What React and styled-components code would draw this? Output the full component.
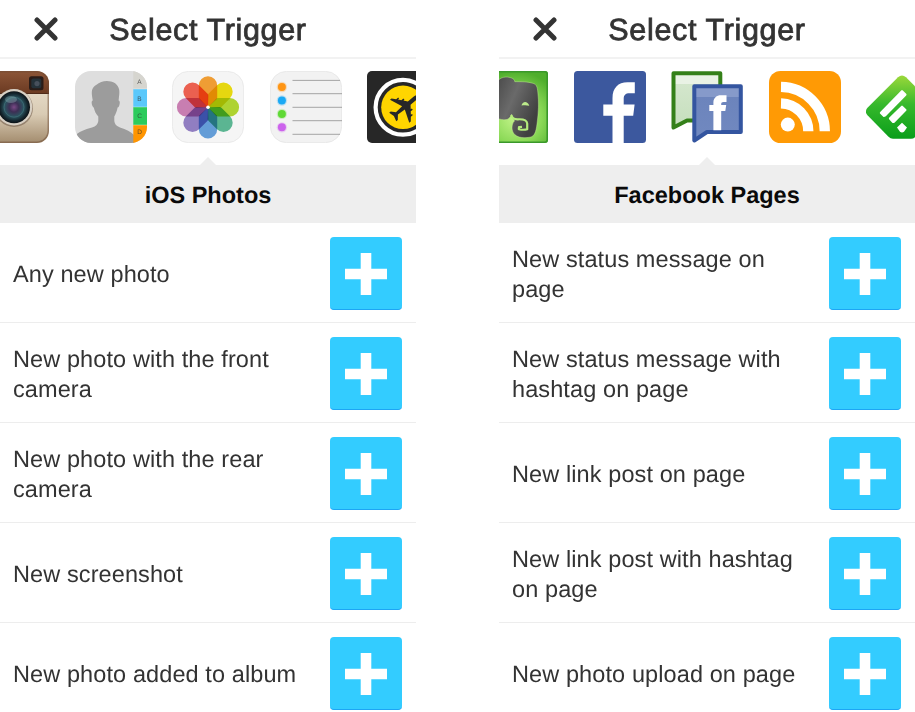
import React from 'react'
import styled, { createGlobalStyle } from 'styled-components'

const triggers = {
  photos: [
    'Any new photo',
    'New photo with the front camera',
    'New photo with the rear camera',
    'New screenshot',
    'New photo added to album'
  ],
  pages: [
    'New status message on page',
    'New status message with hashtag on page',
    'New link post on page',
    'New link post with hashtag on page',
    'New photo upload on page'
  ]
}

const petals = [
  '#f9a436',
  '#f0e010',
  '#b5dc33',
  '#5fbd98',
  '#68a4e0',
  '#9783c9',
  '#d083b8',
  '#f56453'
]

const InstagramIcon = () => (
  <Icon viewBox="0 0 72 72">
    <defs>
      <linearGradient id="igBrown" x2="0" y2="1">
        <stop offset="0" stopColor="#8d5638" />
        <stop offset="1" stopColor="#6b3a22" />
      </linearGradient>
      <linearGradient id="igCream" x2="0" y2="1">
        <stop offset="0" stopColor="#efe6d6" />
        <stop offset="0.6" stopColor="#d9cbb4" />
        <stop offset="1" stopColor="#a38c6e" />
      </linearGradient>
      <radialGradient id="igLens">
        <stop offset="0" stopColor="#7a4a86" />
        <stop offset="0.3" stopColor="#3d2f55" />
        <stop offset="0.6" stopColor="#2b5560" />
        <stop offset="0.85" stopColor="#15262e" />
        <stop offset="1" stopColor="#0c1216" />
      </radialGradient>
      <clipPath id="igClip">
        <rect width="72" height="72" rx="12" />
      </clipPath>
    </defs>
    <g clipPath="url(#igClip)">
      <rect width="72" height="72" fill="url(#igCream)" />
      <rect width="72" height="22.5" fill="url(#igBrown)" />
      <rect y="22" width="72" height="1" fill="#4f2a19" />
      <rect
        x="0.75"
        y="0.75"
        width="70.5"
        height="70.5"
        rx="11.5"
        fill="none"
        stroke="#6b4a34"
        strokeOpacity="0.5"
        strokeWidth="1.5"
      />
    </g>
    <rect x="52" y="5.3" width="14.5" height="14" rx="2.5" fill="#2a1c18" />
    <rect x="54.3" y="7.5" width="10" height="9.8" rx="2" fill="#25323a" />
    <circle cx="60" cy="12.6" r="2.6" fill="#47505c" />
    <circle cx="37" cy="37" r="19" fill="#6d5847" fillOpacity="0.55" />
    <circle cx="37" cy="36.2" r="18.2" fill="#d8d0c4" />
    <circle cx="37" cy="36.2" r="16" fill="url(#igLens)" />
    <circle cx="37" cy="36.2" r="10" fill="none" stroke="#4c7c86" strokeOpacity="0.5" />
    <ellipse cx="34" cy="28.5" rx="6" ry="3.5" fill="#9dc0c4" fillOpacity="0.35" />
  </Icon>
)

const ContactsIcon = () => (
  <Icon viewBox="0 0 72 72">
    <defs>
      <clipPath id="contactsClip">
        <rect width="72" height="72" rx="16" />
      </clipPath>
    </defs>
    <g clipPath="url(#contactsClip)">
      <rect width="72" height="72" fill="#dedede" />
      <path
        d="M0 65C3 61 10 58.5 17 56.5C21 55.3 23 53 23.3 50V45.5C21 43 19.5 40 18.8 36.5C17.3 36 16.3 32 16.8 30.5C17 29.8 17.5 29.6 17.8 29.6C16.8 24 16 19.5 18.3 16.5C19.5 14.8 20.5 14.5 21.5 13.8C25 10.5 31 9 36 10.5C42.5 12.3 45 17 44.3 23L43.6 29.6C44.5 29.6 45 31 44.7 32.5C44.3 35 43.6 36.6 42.6 36.6C42 40 40.8 43 39.3 45.5V50C39.5 53 41.5 55.2 45 56.5C51 58.5 56 60.5 59 64V72H0Z"
        fill="#9c9c9c"
      />
      <rect x="58.3" width="14" height="18" fill="#d6d5cf" />
      <rect x="58.3" y="18" width="14" height="18" fill="#5ac8fb" />
      <rect x="58.3" y="36" width="14" height="18" fill="#2ccb5c" />
      <rect x="58.3" y="54" width="14" height="18" fill="#ff9500" />
      <path d="M58.3 18H72M58.3 36H72M58.3 54H72" stroke="#fff" strokeOpacity="0.5" strokeWidth="0.7" />
    </g>
    <TabLetter x="64.5" y="13.2">A</TabLetter>
    <TabLetter x="64.5" y="29.5">B</TabLetter>
    <TabLetter x="64.5" y="47">C</TabLetter>
    <TabLetter x="64.5" y="63.3">D</TabLetter>
  </Icon>
)

const PhotosIcon = () => (
  <Icon viewBox="0 0 72 72">
    <rect x="0.4" y="0.4" width="71.2" height="71.2" rx="16" fill="#f5f5f5" stroke="#e6e6e6" strokeWidth="0.8" />
    {petals.map((color, i) => (
      <Petal
        key={color}
        d="M26.8 14.4A9.2 9.2 0 0 1 45.2 14.4V26.5Q45.2 27.5 44.4 28.3L36 36.3L27.6 28.3Q26.8 27.5 26.8 26.5Z"
        fill={color}
        transform={`rotate(${i * 45} 36 36.3)`}
      />
    ))}
    <circle cx="36" cy="36.3" r="1.8" fill="#fff" />
  </Icon>
)

const RemindersIcon = () => (
  <Icon viewBox="0 0 72 72">
    <rect x="0.4" y="0.4" width="71.2" height="71.2" rx="16" fill="#f2f2f2" stroke="#e4e4e4" strokeWidth="0.8" />
    {['#ff9514', '#1ba9f5', '#5fd935', '#cc63ec'].map((color, i) => (
      <g key={color}>
        <circle cx="11.9" cy={16 + i * 13.45} r="5.2" fill={color} fillOpacity="0.25" />
        <circle cx="11.9" cy={16 + i * 13.45} r="4" fill={color} />
      </g>
    ))}
    <path
      d="M22.5 9.4H70M22.5 22.7H72M22.5 36.3H72M22.5 49.7H72M22.5 63.3H70"
      stroke="#9b9b9b"
      strokeWidth="0.9"
    />
  </Icon>
)

const FlightIcon = () => (
  <Icon viewBox="0 0 72 72">
    <rect width="72" height="72" rx="5" fill="#272727" />
    <circle cx="36" cy="36.3" r="27.4" fill="none" stroke="#fff" strokeWidth="4.2" />
    <circle cx="36" cy="36.3" r="21.8" fill="#ffd500" />
    <path
      d="M0 -18C1.4 -18 2.1 -15.5 2.1 -13V-6L5.7 -3.2V-4.6H7.3V-1.9L10 0.2V-1.2H11.4V1.4L15 4.5V6.5L2.1 1.5L1.5 10L5.5 13.5V15.5L0 14L-5.5 15.5V13.5L-1.5 10L-2.1 1.5L-15 6.5V4.5L-11.4 1.4V-1.2H-10V0.2L-7.3 -1.9V-4.6H-5.7V-3.2L-2.1 -6V-13C-2.1 -15.5 -1.4 -18 0 -18Z"
      transform="translate(37.6 36) rotate(50)"
      fill="#272727"
    />
  </Icon>
)

const EvernoteIcon = () => (
  <Icon viewBox="0 0 72 72">
    <defs>
      <radialGradient id="enGreen" cx="0.55" cy="0.65" r="0.65">
        <stop offset="0" stopColor="#c5f58b" />
        <stop offset="0.55" stopColor="#8bd957" />
        <stop offset="1" stopColor="#4fae2c" />
      </radialGradient>
      <linearGradient id="enGrey" x2="1" y2="0.5">
        <stop offset="0" stopColor="#3c3c3c" />
        <stop offset="0.55" stopColor="#6a6a6a" />
        <stop offset="1" stopColor="#404040" />
      </linearGradient>
    </defs>
    <rect width="72" height="72" rx="3" fill="url(#enGreen)" />
    <rect x="0.8" y="0.8" width="70.4" height="70.4" rx="2.5" fill="none" stroke="#3a982a" strokeWidth="1.6" />
    <path
      d="M10 21L20 12C23 7 28 5.3 33 6.3C37 7 38.6 8.5 38.8 10.7C46 10.5 52 10.8 57 12.3C60.5 13.3 61.3 16 61.8 21C63 31 62.5 42 61 53C60 61 58.5 65.5 54 66.2C49 67 42.5 67 39 63.8C36 61 35.5 57 36.5 53.5C36.8 52 37.5 50.8 38.5 50L35.5 43.3C34.5 47 31.5 49.2 27.5 48.8C22 48 14 46 10 40Z"
      fill="url(#enGrey)"
      stroke="#c9f397"
      strokeOpacity="0.6"
      strokeWidth="0.7"
    />
    <path
      d="M35.2 44C36 47 38 48.5 42 48.3C48 48 50.8 49 51.2 52.5V58.2C48.5 59 45.5 58.8 42.8 58.2L43 56L46 55.8"
      fill="none"
      stroke="#b4ec7c"
      strokeWidth="2.2"
      strokeLinejoin="round"
    />
    <path d="M45.5 34.5C46.5 30 51.5 29.5 53.3 34.8C51 34 48 34 45.5 34.5Z" fill="#bcea8b" />
  </Icon>
)

const FacebookIcon = () => (
  <Icon viewBox="0 0 72 72">
    <rect width="72" height="72" rx="3.5" fill="#3c589e" />
    <path
      d="M38.5 72V44.7H29.3V33.4H38.5V27C38.5 17 44 11.2 53.5 11.2H60.8V22.2H55.5C51.5 22.2 49.7 24 49.7 27.8V33.4H60.6L59.2 44.7H49.7V72Z"
      fill="#fff"
    />
  </Icon>
)

const FacebookPagesIcon = () => (
  <Icon viewBox="0 0 72 72">
    <defs>
      <linearGradient id="pagesBlue" x2="0" y2="1">
        <stop offset="0.2" stopColor="#869aca" />
        <stop offset="0.2" stopColor="#6c84bc" />
        <stop offset="1" stopColor="#7189c0" />
      </linearGradient>
      <linearGradient id="pagesGreen" x2="0" y2="1">
        <stop offset="0.2" stopColor="#e9f2e5" />
        <stop offset="0.2" stopColor="#d3e6cc" />
        <stop offset="1" stopColor="#c6dfbd" />
      </linearGradient>
    </defs>
    <path
      d="M2.5 2.2H49.3V49.5H16L2.5 56.5Z"
      fill="url(#pagesGreen)"
      stroke="#348019"
      strokeWidth="4"
      strokeLinejoin="round"
    />
    <path
      d="M23.3 15.2H69.8V61H36L23.3 69.5Z"
      fill="url(#pagesBlue)"
      stroke="#3455a0"
      strokeWidth="4"
      strokeLinejoin="round"
    />
    <path
      d="M42.4 59.2V40H38.3V34H42.4V31.5C42.4 27 45.5 24.3 50 24.3H55.5V31H52.5C50.8 31 50.2 31.7 50.2 33V34H55.2L54.3 40H50.2V59.2Z"
      fill="#fff"
    />
  </Icon>
)

const RssIcon = () => (
  <Icon viewBox="0 0 72 72">
    <rect width="72" height="72" rx="11.5" fill="#ff9a05" />
    <circle cx="18.8" cy="53.6" r="7" fill="#fff" />
    <path
      d="M12 32.3A28 28 0 0 1 39.3 60.3M12 15.9A44.4 44.4 0 0 1 55.8 60.3"
      fill="none"
      stroke="#fff"
      strokeWidth="10.3"
    />
  </Icon>
)

const FeedlyIcon = () => (
  <Icon viewBox="0 0 72 72">
    <defs>
      <linearGradient id="feedlyGreen" x2="0" y2="1">
        <stop offset="0" stopColor="#9bd83a" />
        <stop offset="0.45" stopColor="#37b92c" />
        <stop offset="1" stopColor="#0a9e1a" />
      </linearGradient>
    </defs>
    <path
      d="M32 6.3Q36 2.8 40 6.3L70.5 36.8Q74 40.5 70.5 44.3L49.5 65.8Q47.5 67.8 45 67.8H27Q24.5 67.8 22.5 65.8L1.5 44.3Q-1.8 40.5 1.5 36.8Z"
      fill="url(#feedlyGreen)"
    />
    <path
      d="M35.2 19.5Q36 18.7 36.8 19.5L40.2 22.8Q41 23.6 40.2 24.4L19.8 45.2Q19 46 17.5 46L14.2 42.8Q13.3 41.9 14.2 41ZM35.2 34.9Q36 34.1 36.8 34.9L40.2 38.2Q41 39 40.2 39.8L28.7 51.5Q28 52.3 26.5 52L23.3 48.5Q22.3 47.5 23.3 46.6ZM36 51.8L41 56.6L38 60.8Q36 62 34 60.8L31 56.6Z"
      fill="#fff"
    />
  </Icon>
)

const PlusButton = () => (
  <AddButton>
    <svg width="42" height="42" viewBox="0 0 42 42">
      <path d="M15.7 0H26.3V15.7H42V26.3H26.3V42H15.7V26.3H0V15.7H15.7Z" fill="#fff" />
    </svg>
  </AddButton>
)

const TriggerScreen = ({ channel, icons, items }) => (
  <Screen>
    <Header>
      <Close>
        <svg width="24" height="24" viewBox="0 0 24 24">
          <path d="M3 3L21 21M21 3L3 21" stroke="#333" strokeWidth="5" strokeLinecap="round" />
        </svg>
      </Close>
      <Title>Select Trigger</Title>
    </Header>
    <Channels>
      {icons.map((ChannelIcon, i) => (
        <ChannelIcon key={i} />
      ))}
    </Channels>
    <ChannelName>{channel}</ChannelName>
    <List>
      {items.map(item => (
        <Row key={item}>
          <Label>{item}</Label>
          <PlusButton />
        </Row>
      ))}
    </List>
  </Screen>
)

const App = () => (
  <>
    <GlobalStyle />
    <Page>
      <TriggerScreen
        channel="iOS Photos"
        icons={[InstagramIcon, ContactsIcon, PhotosIcon, RemindersIcon, FlightIcon]}
        items={triggers.photos}
      />
      <TriggerScreen
        channel="Facebook Pages"
        icons={[EvernoteIcon, FacebookIcon, FacebookPagesIcon, RssIcon, FeedlyIcon]}
        items={triggers.pages}
      />
    </Page>
  </>
)

export default App

const GlobalStyle = createGlobalStyle`
  body {
    margin: 0;
    overflow: hidden;
    background-color: #FFFFFF;
    font-family: "Liberation Sans", Arial, sans-serif;
    text-rendering: geometricPrecision;
  }
`

const Page = styled.div`
  display: grid;
  grid-template-columns: 416px 416px;
  justify-content: space-between;
  height: 712px;
  overflow: hidden;
`

const Screen = styled.section`
  display: flex;
  flex-direction: column;
  min-width: 0;
  height: 712px;
  overflow: hidden;
`

const Header = styled.header`
  flex: none;
  display: grid;
  grid-template-columns: 91px 1fr 91px;
  align-items: center;
  box-sizing: border-box;
  height: 59px;
  border-bottom: 2px solid #F2F2F2;
`

const Close = styled.button`
  justify-self: center;
  display: block;
  width: 24px;
  height: 24px;
  padding: 0;
  border: 0;
  background: none;
  cursor: pointer;
  & svg {
    display: block;
  }
`

const Title = styled.h1`
  margin: 2px 0 0;
  font-size: 30.5px;
  line-height: 36px;
  font-weight: normal;
  letter-spacing: 0.65px;
  text-align: center;
  white-space: nowrap;
  color: #333333;
  -webkit-text-stroke: 0.8px #333333;
`

const Channels = styled.nav`
  flex: none;
  display: flex;
  justify-content: center;
  gap: 25.5px;
  box-sizing: border-box;
  height: 106px;
  padding-top: 12px;
  overflow: hidden;
`

const Icon = styled.svg`
  flex: none;
  display: block;
  width: 72px;
  height: 72px;
`

const TabLetter = styled.text`
  font-size: 6.5px;
  text-anchor: middle;
  fill: #333333;
  fill-opacity: 0.75;
`

const Petal = styled.path`
  mix-blend-mode: multiply;
`

const ChannelName = styled.h2`
  flex: none;
  position: relative;
  margin: 0;
  height: 58px;
  font-size: 23.5px;
  line-height: 60px;
  font-weight: bold;
  text-align: center;
  color: #0A0A0A;
  background-color: #EEEEEE;
  &::before {
    content: '';
    position: absolute;
    top: -8px;
    left: 50%;
    margin-left: -8px;
    border: 8px solid transparent;
    border-top: 0;
    border-bottom-color: #EEEEEE;
  }
`

const List = styled.ul`
  margin: 0;
  padding: 0;
  list-style: none;
`

const Row = styled.li`
  display: flex;
  align-items: center;
  justify-content: space-between;
  box-sizing: border-box;
  height: 100px;
  padding: 1px 14px 0 13px;
  border-bottom: 1px solid #EDEDED;
`

const Label = styled.span`
  width: 302px;
  padding-top: 2px;
  font-size: 23.5px;
  line-height: 30px;
  letter-spacing: 0.1px;
  color: #333333;
`

const AddButton = styled.button`
  flex: none;
  display: grid;
  place-items: center;
  box-sizing: border-box;
  width: 72px;
  height: 73px;
  padding: 2px 0 0;
  border: 0;
  border-bottom: 1px solid #1DA5F5;
  border-radius: 4px;
  background-color: #33CCFF;
  cursor: pointer;
`
